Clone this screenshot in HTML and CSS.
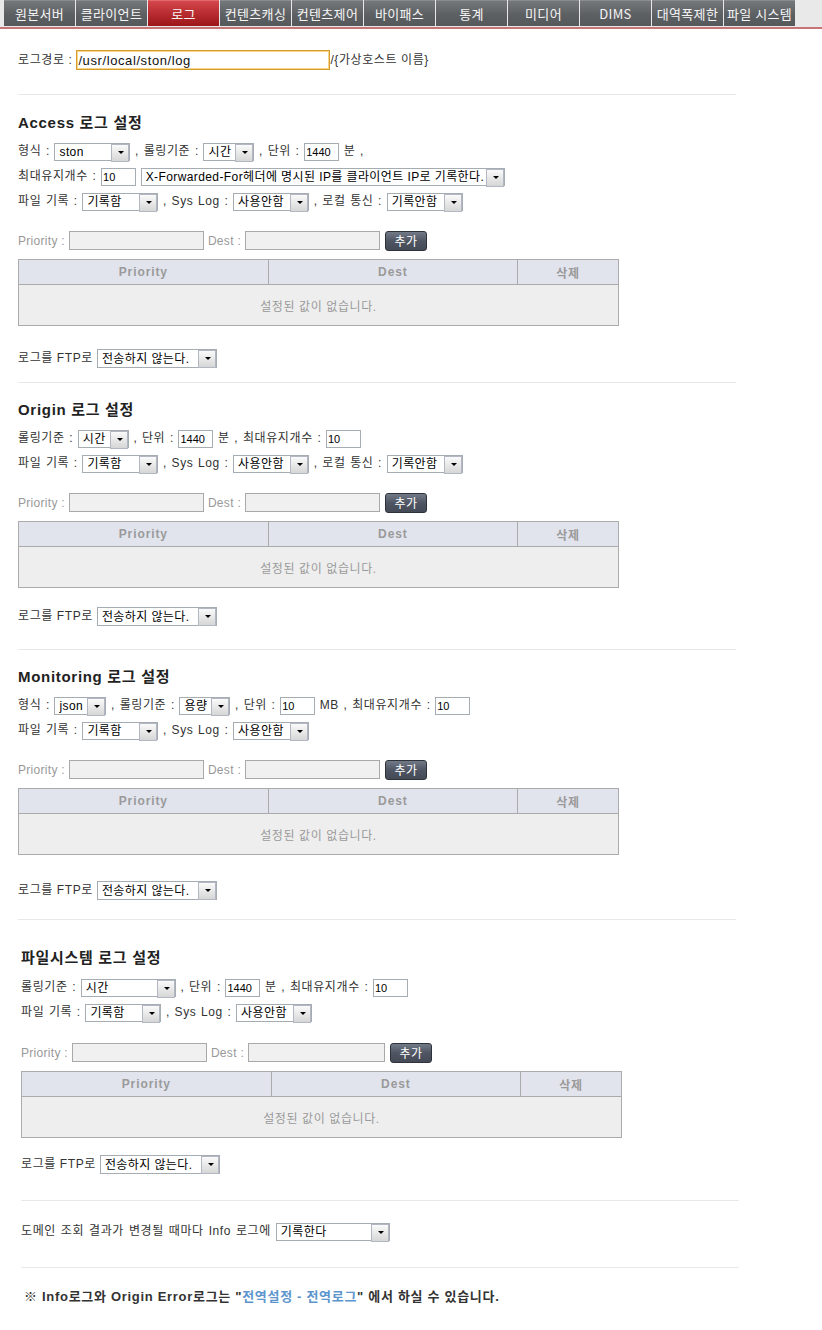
FILE: index.html
```html
<!DOCTYPE html>
<html lang="ko">
<head>
<meta charset="utf-8">
<title>로그 설정</title>
<link rel="stylesheet" href="styles.css">
</head>
<body>
<nav class="nav">
  <a class="tab">원본서버</a>
  <a class="tab">클라이언트</a>
  <a class="tab active">로그</a>
  <a class="tab">컨텐츠캐싱</a>
  <a class="tab">컨텐츠제어</a>
  <a class="tab">바이패스</a>
  <a class="tab">통계</a>
  <a class="tab">미디어</a>
  <a class="tab">DIMS</a>
  <a class="tab">대역폭제한</a>
  <a class="tab">파일 시스템</a>
</nav>

<main class="page">
  <div class="path-row">로그경로 : <input class="path" value="/usr/local/ston/log">/{가상호스트 이름}</div>
  <hr class="sep sep-1">

  <section class="sec">
    <h3 class="title t-1">Access 로그 설정</h3>
    <div class="rows">
      <div class="row">형식 : <span class="sel w76"><select><option>ston</option></select></span> , 롤링기준 : <span class="sel w51"><select><option>시간</option></select></span> , 단위 : <input class="inp" value="1440"> 분 ,</div>
      <div class="row">최대유지개수 : <input class="inp" value="10"> <span class="sel w364"><select><option>X-Forwarded-For헤더에 명시된 IP를 클라이언트 IP로 기록한다.</option></select></span></div>
      <div class="row">파일 기록 : <span class="sel w76"><select><option>기록함</option></select></span> , Sys Log : <span class="sel w76"><select><option>사용안함</option></select></span> , 로컬 통신 : <span class="sel w76"><select><option>기록안함</option></select></span></div>
    </div>
    <div class="prio"><span class="plabel">Priority :</span> <input class="pin" disabled> <span class="plabel">Dest :</span> <input class="pin" disabled> <button class="btn">추가</button></div>
    <table class="grid">
      <thead><tr><th class="c1">Priority</th><th class="c2">Dest</th><th class="c3">삭제</th></tr></thead>
      <tbody><tr><td colspan="3">설정된 값이 없습니다.</td></tr></tbody>
    </table>
    <div class="ftp f-1">로그를 FTP로 <span class="sel w120"><select><option>전송하지 않는다.</option></select></span></div>
  </section>
  <hr class="sep sep-2">

  <section class="sec">
    <h3 class="title t-2">Origin 로그 설정</h3>
    <div class="rows">
      <div class="row">롤링기준 : <span class="sel w51"><select><option>시간</option></select></span> , 단위 : <input class="inp" value="1440"> 분 , 최대유지개수 : <input class="inp" value="10"></div>
      <div class="row">파일 기록 : <span class="sel w76"><select><option>기록함</option></select></span> , Sys Log : <span class="sel w76"><select><option>사용안함</option></select></span> , 로컬 통신 : <span class="sel w76"><select><option>기록안함</option></select></span></div>
    </div>
    <div class="prio"><span class="plabel">Priority :</span> <input class="pin" disabled> <span class="plabel">Dest :</span> <input class="pin" disabled> <button class="btn">추가</button></div>
    <table class="grid">
      <thead><tr><th class="c1">Priority</th><th class="c2">Dest</th><th class="c3">삭제</th></tr></thead>
      <tbody><tr><td colspan="3">설정된 값이 없습니다.</td></tr></tbody>
    </table>
    <div class="ftp f-2">로그를 FTP로 <span class="sel w120"><select><option>전송하지 않는다.</option></select></span></div>
  </section>
  <hr class="sep sep-3">

  <section class="sec">
    <h3 class="title t-3">Monitoring 로그 설정</h3>
    <div class="rows">
      <div class="row">형식 : <span class="sel w52"><select><option>json</option></select></span> , 롤링기준 : <span class="sel w51"><select><option>용량</option></select></span> , 단위 : <input class="inp" value="10"> MB , 최대유지개수 : <input class="inp" value="10"></div>
      <div class="row">파일 기록 : <span class="sel w76"><select><option>기록함</option></select></span> , Sys Log : <span class="sel w76"><select><option>사용안함</option></select></span></div>
    </div>
    <div class="prio"><span class="plabel">Priority :</span> <input class="pin" disabled> <span class="plabel">Dest :</span> <input class="pin" disabled> <button class="btn">추가</button></div>
    <table class="grid">
      <thead><tr><th class="c1">Priority</th><th class="c2">Dest</th><th class="c3">삭제</th></tr></thead>
      <tbody><tr><td colspan="3">설정된 값이 없습니다.</td></tr></tbody>
    </table>
    <div class="ftp f-3">로그를 FTP로 <span class="sel w120"><select><option>전송하지 않는다.</option></select></span></div>
  </section>
  <hr class="sep sep-4">

  <div class="shift">
    <section class="sec">
      <h3 class="title t-4">파일시스템 로그 설정</h3>
      <div class="rows rows-fs">
        <div class="row">롤링기준 : <span class="sel w95"><select><option>시간</option></select></span> , 단위 : <input class="inp" value="1440"> 분 , 최대유지개수 : <input class="inp" value="10"></div>
        <div class="row">파일 기록 : <span class="sel w76"><select><option>기록함</option></select></span> , Sys Log : <span class="sel w76"><select><option>사용안함</option></select></span></div>
      </div>
      <div class="prio prio-fs"><span class="plabel">Priority :</span> <input class="pin" disabled> <span class="plabel">Dest :</span> <input class="pin pin-w" disabled> <button class="btn">추가</button></div>
      <table class="grid">
        <thead><tr><th class="c1">Priority</th><th class="c2">Dest</th><th class="c3">삭제</th></tr></thead>
        <tbody><tr><td colspan="3">설정된 값이 없습니다.</td></tr></tbody>
      </table>
      <div class="ftp f-4">로그를 FTP로 <span class="sel w120"><select><option>전송하지 않는다.</option></select></span></div>
    </section>
    <hr class="sep sep-5">
    <div class="domain">도메인 조회 결과가 변경될 때마다 Info 로그에 <span class="sel w114"><select><option>기록한다</option></select></span></div>
    <hr class="sep sep-6">
    <p class="note">※ Info로그와 Origin Error로그는 "<a class="link">전역설정 - 전역로그</a>" 에서 하실 수 있습니다.</p>
  </div>
</main>
</body>
</html>
```

FILE: styles.css
```css
* { box-sizing: border-box; }

body {
  margin: 0;
  background: #fff;
  color: #333;
  font-family: "Liberation Sans", "Noto Sans CJK KR", sans-serif;
  font-size: 12px;
  letter-spacing: 0.6px;
  word-spacing: 0.7px;
}

/* ---------- top tabs ---------- */
.nav {
  display: flex;
  height: 29px;
  padding: 0 0 1px 4px;
  background: #e9e9e9;
  border-bottom: 2px solid #c77476;
  letter-spacing: 0.3px;
  word-spacing: 0;
}
.tab {
  display: block;
  width: 71px;
  height: 26px;
  margin-right: 1px;
  line-height: 26px;
  text-align: center;
  font-family: "Noto Sans CJK KR", "Liberation Sans", sans-serif;
  font-size: 13px;
  color: #f5f5f5;
  background: linear-gradient(#75787b, #5d6063 55%, #56595c);
  border-top: 1px solid #8a8d90;
  white-space: nowrap;
}
.tab.active {
  background: linear-gradient(#d4474c, #b52a2e 55%, #9c1719);
  border-top-color: #e2686c;
}

/* ---------- page ---------- */
.page { padding-left: 18px; }
.shift { padding-left: 3px; }

.path-row {
  margin-top: 21px;
  height: 20px;
  line-height: 20px;
  word-spacing: 0;
}
.path {
  width: 254px;
  height: 20px;
  margin: 0;
  padding: 0 1px;
  vertical-align: top;
  border: 1px solid #d69a2d;
  box-shadow: inset 0 0 0 1px #f6d68a;
  font-family: "Liberation Sans", sans-serif;
  font-size: 13px;
  letter-spacing: 0.6px;
  color: #111;
  outline: none;
}

.sep {
  width: 718px;
  height: 1px;
  margin: 0;
  border: 0;
  background: #e8e8e8;
}
.sep-1 { margin-top: 24px; }
.sep-2 { margin-top: 14px; }
.sep-3 { margin-top: 23px; }
.sep-4 { margin-top: 19px; }
.sep-5 { margin-top: 26px; }
.sep-6 { margin-top: 26px; }

.title {
  margin: 0;
  height: 20px;
  line-height: 20px;
  font-size: 15px;
  font-weight: bold;
  letter-spacing: 0.7px;
  word-spacing: 0;
  color: #222;
}
.t-1 { margin-top: 18px; }
.t-2 { margin-top: 17px; }
.t-3 { margin-top: 17px; }
.t-4 { margin-top: 28px; }

.rows { margin-top: 6px; }
.rows-fs { margin-top: 7px; }
.row {
  height: 25px;
  line-height: 25px;
  white-space: nowrap;
}

/* select look-alike */
.sel {
  position: relative;
  display: inline-block;
  vertical-align: middle;
  height: 18px;
  line-height: normal;
  letter-spacing: 0;
  word-spacing: 0;
}
.sel select {
  -webkit-appearance: none;
  appearance: none;
  display: block;
  width: 100%;
  height: 18px;
  margin: 0;
  padding: 0 18px 0 4px;
  border: 1px solid #a5acb2;
  border-radius: 0;
  background: #fff;
  color: #000;
  font-family: "Liberation Sans", "Noto Sans CJK KR", sans-serif;
  font-size: 12px;
  letter-spacing: 0.4px;
}
.sel::after {
  content: "";
  position: absolute;
  right: 1px;
  top: 1px;
  width: 16px;
  height: 16px;
  border: 1px solid #b3b6c3;
  background: linear-gradient(#fafafa, #d6d6d6);
}
.sel::before {
  content: "";
  position: absolute;
  z-index: 1;
  right: 6px;
  top: 8px;
  border-left: 3px solid transparent;
  border-right: 3px solid transparent;
  border-top: 3px solid #000;
}
.w51 { width: 51px; }
.w52 { width: 52px; }
.w76 { width: 76px; }
.w95 { width: 95px; }
.w114 { width: 114px; }
.w120 { width: 120px; height: 19px; }
.w120 select { height: 19px; }
.w120::before { top: 8px; }
.w364 { width: 364px; }

.inp {
  display: inline-block;
  vertical-align: middle;
  width: 35px;
  height: 18px;
  margin: 0;
  padding: 0 1px;
  border: 1px solid #a5acb2;
  background: #fff;
  font-family: "Liberation Sans", sans-serif;
  font-size: 11px;
  letter-spacing: 0;
  color: #000;
}

/* priority add row */
.prio {
  margin-top: 17px;
  height: 20px;
  line-height: 20px;
  white-space: nowrap;
  word-spacing: 0;
}
.prio-fs { margin-top: 18px; }
.plabel { color: #999; letter-spacing: 0.3px; }
.pin {
  display: inline-block;
  vertical-align: top;
  width: 135px;
  height: 19px;
  margin: 0;
  border: 1px solid #a9a9a9;
  background: #f0f0f0;
}
.pin-w { width: 137px; }
.btn {
  display: inline-block;
  vertical-align: top;
  width: 42px;
  height: 20px;
  margin: 0 0 0 1px;
  padding: 0;
  border: 1px solid #2e323a;
  border-radius: 3px;
  background: linear-gradient(#737a87, #4f5562 50%, #444a56);
  color: #fff;
  font-family: "Noto Sans CJK KR", sans-serif;
  font-size: 12px;
  letter-spacing: 0.5px;
  line-height: 18px;
}

/* table */
.grid {
  margin-top: 8px;
  width: 601px;
  border-collapse: collapse;
  word-spacing: 0;
}
.grid th {
  height: 25px;
  padding: 0;
  border: 1px solid #ababab;
  background: #e1e4ed;
  color: #9a9a9a;
  font-weight: bold;
  font-size: 12px;
  letter-spacing: 0.9px;
}
.grid .c1, .grid .c2 { width: 250px; }
.grid .c3 { width: 101px; }
.grid td {
  height: 41px;
  padding: 0;
  border: 1px solid #ababab;
  background: #eeeeee;
  color: #9a9a9a;
  text-align: center;
}

.ftp {
  height: 19px;
  line-height: 19px;
  white-space: nowrap;
  word-spacing: 0;
}
.f-1 { margin-top: 23px; }
.f-2 { margin-top: 19px; }
.f-3 { margin-top: 26px; }
.f-4 { margin-top: 17px; }

.domain {
  margin-top: 20px;
  height: 20px;
  line-height: 20px;
  word-spacing: 1px;
}

.note {
  margin: 19px 0 0 3px;
  height: 20px;
  line-height: 20px;
  font-size: 13px;
  font-weight: bold;
  letter-spacing: 0.7px;
  word-spacing: 0;
  color: #333;
}
.link { color: #5d95cd; }
```
